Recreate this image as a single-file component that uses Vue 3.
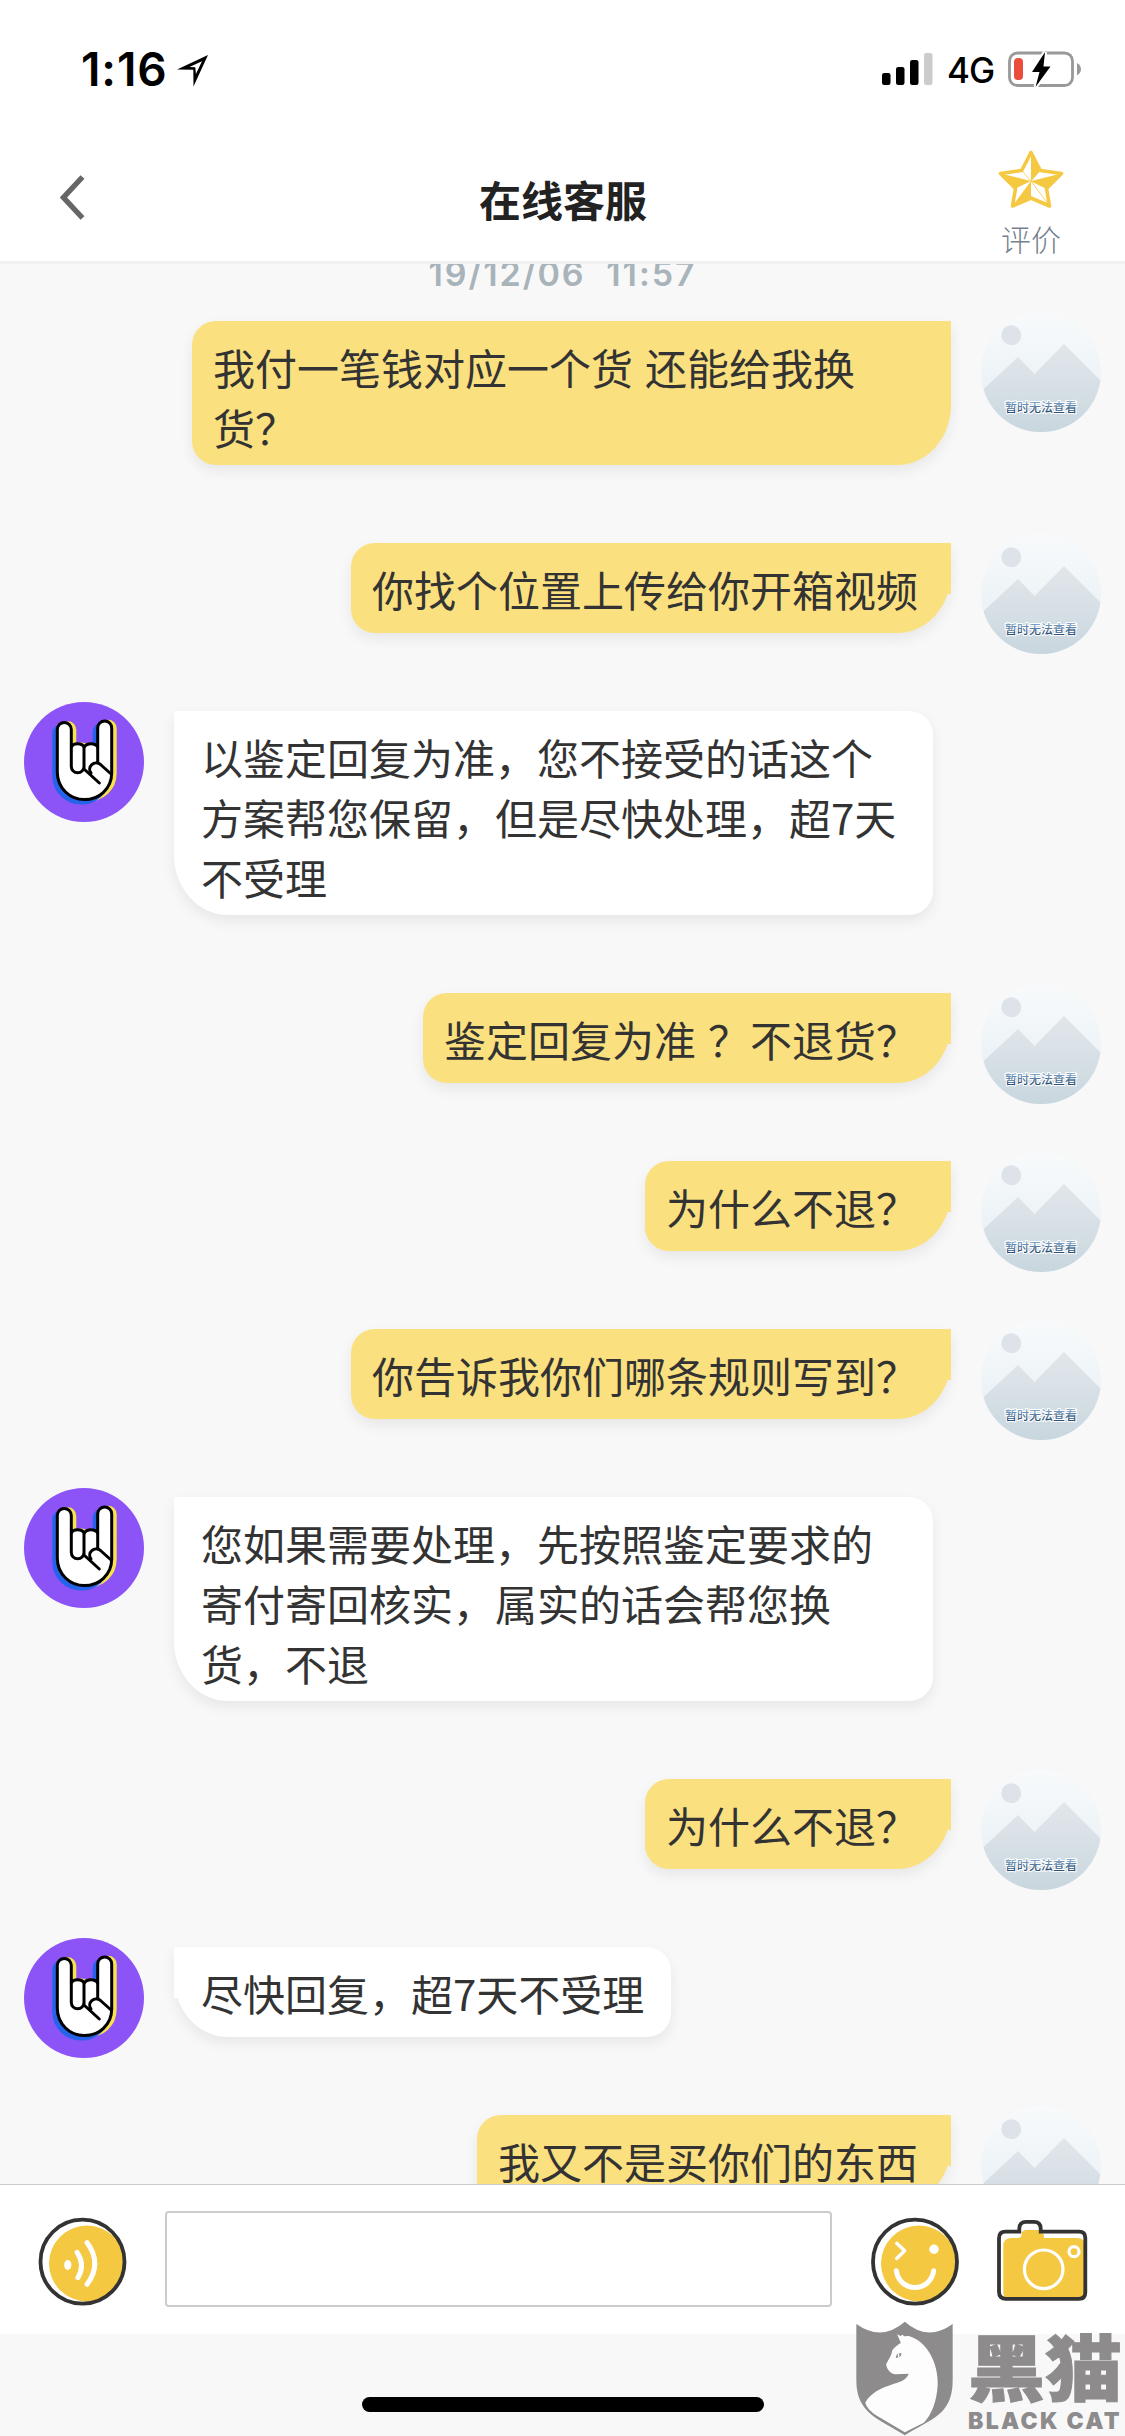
<script setup>
const messages = [
  { me: true, text: '我付一笔钱对应一个货 还能给我换货？' },
  { me: true, text: '你找个位置上传给你开箱视频' },
  { me: false, text: '以鉴定回复为准，您不接受的话这个方案帮您保留，但是尽快处理，超7天不受理' },
  { me: true, text: '鉴定回复为准 ？不退货？' },
  { me: true, text: '为什么不退？' },
  { me: true, text: '你告诉我你们哪条规则写到？' },
  { me: false, text: '您如果需要处理，先按照鉴定要求的寄付寄回核实，属实的话会帮您换货，不退' },
  { me: true, text: '为什么不退？' },
  { me: false, text: '尽快回复，超7天不受理' },
  { me: true, text: '我又不是买你们的东西' },
]

const hand =
  'M33.3 70V27.5a7 7 0 0 1 14 0V45c2-4.500 10.500-4.500 13 0c2.500-4.500 11-4.500 13.400 0V26a7 7 0 0 1 14 0V71c0 16-13 26.600-27.200 26.600S33.300 86.500 33.300 70Z'
</script>

<template>
  <div class="screen">
    <header class="top">
      <div class="status">
        <div class="clock">
          <span class="time">1:16</span>
          <svg class="locate" width="32" height="34" viewBox="0 0 32 34">
            <path d="M0 14.500L31 0L16.500 31.500L16.300 14.700Z" fill="#000" />
            <path d="M12.500 11.900L25 6.300L18.900 19L18.300 12.300Z" fill="#fff" />
          </svg>
        </div>
        <div class="signals">
          <svg width="51" height="32" viewBox="0 0 51 32">
            <rect x="0" y="20" width="8.500" height="12" rx="2.200" />
            <rect x="14" y="14" width="8.500" height="18" rx="2.200" />
            <rect x="28" y="7" width="8.500" height="25" rx="2.200" />
            <rect x="42" y="0" width="8.500" height="32" rx="2.200" fill="#ccc" />
          </svg>
          <span class="net">4G</span>
          <svg class="battery" width="74" height="36" viewBox="0 0 74 36">
            <rect x="1.500" y="2" width="63" height="32.500" rx="8" fill="none" stroke="#999" stroke-width="2.800" />
            <path d="M69 12q4 2.500 4 6.200t-4 6.200Z" fill="#999" />
            <rect x="6" y="7" width="9" height="22" rx="4" fill="#eb4d3d" />
            <path d="M37 1L24 21H31.500L27.500 36L42.500 15.500H35.500Z" fill="#000" stroke="#fff" stroke-width="4" paint-order="stroke" />
          </svg>
        </div>
      </div>
      <nav class="nav">
        <svg class="back" width="26" height="46" viewBox="0 0 26 46">
          <path d="M22.500 2L3.500 22.500L22.500 43" fill="none" stroke="#666" stroke-width="5.400" />
        </svg>
        <h1 class="title">在线客服</h1>
        <div class="rate">
          <svg width="66" height="58" viewBox="0 0 66 58">
            <path d="M33 2.500L42.300 20.500L63.500 23.500L48.500 38.500L51.500 56L33 48L14.500 56L17.500 38.500L2.500 23.500L23.700 20.500Z" fill="#fff" stroke="#f5c842" stroke-width="3.600" stroke-linejoin="round" />
            <g fill="#f5c842">
              <path d="M33 31V2.500L42.300 20.500Z" />
              <path d="M33 31L63.500 23.500L48.500 38.500Z" />
              <path d="M33 31V48L14.500 56Z" />
              <path d="M33 31L17.500 38.500L2.500 23.500Z" />
            </g>
            <path d="M33 31L23.700 20.500M33 31L42.300 20.500M33 31L48.500 38.500M33 31L51.500 56" stroke="#f5c842" stroke-width=".8" />
          </svg>
          <span>评价</span>
        </div>
      </nav>
    </header>

    <main class="chat">
      <div class="date">19/12/06&nbsp; 11:57</div>
      <div v-for="(m, i) in messages" :key="i" class="row" :class="{ me: m.me }">
        <svg v-if="!m.me" class="avatar" width="120" height="120" viewBox="0 0 120 120">
          <circle cx="60" cy="60" r="60" fill="#8c54f7" />
          <path :d="hand" transform="translate(3.500 .3)" fill="#fbe14b" stroke="#fbe14b" stroke-width="3" />
          <path :d="hand" transform="translate(-3.500 3.500)" fill="#2563eb" stroke="#2563eb" stroke-width="3" />
          <path :d="hand" fill="#fff" />
          <g fill="none" stroke="#000" stroke-width="3" stroke-linecap="round" stroke-linejoin="round">
            <path :d="hand" />
            <path d="M47.300 45V64.500a6.300 6.300 0 0 0 12.700 0V45V67L75.300 81M73.700 45V61" />
            <path d="M67 71C62.500 65 70.500 57.500 76.500 62.500L86.500 71.500" />
          </g>
        </svg>
        <p class="bubble">{{ m.text }}</p>
        <svg v-if="m.me" class="avatar" width="120" height="120" viewBox="0 0 120 120">
          <defs>
            <linearGradient id="sky" x1="0" y1="0" x2="0" y2="1">
              <stop offset="0" stop-color="#f8fafb" />
              <stop offset=".2" stop-color="#f4f8fa" />
              <stop offset=".6" stop-color="#ecf2f6" />
              <stop offset="1" stop-color="#e2eaf0" />
            </linearGradient>
            <linearGradient id="hill" x1="0" y1="0" x2="0" y2="1">
              <stop offset="0" stop-color="#e2e6ea" />
              <stop offset=".4" stop-color="#d9e1e7" />
              <stop offset="1" stop-color="#c8d6de" />
            </linearGradient>
            <linearGradient id="ink" x1="0" y1="0" x2="0" y2="1">
              <stop offset="0.2" stop-color="#86aacb" />
              <stop offset=".8" stop-color="#2c5078" />
            </linearGradient>
            <clipPath id="disc"><circle cx="60" cy="60" r="60" /></clipPath>
          </defs>
          <g clip-path="url(#disc)">
            <rect width="120" height="120" fill="url(#sky)" />
            <circle cx="30.300" cy="23.300" r="10" fill="#dee3ea" />
            <path d="M-1 80.500L37 45L53.500 62L83 32L121 70V120H-1Z" fill="url(#hill)" />
          </g>
          <text x="60" y="100" text-anchor="middle" class="tag" fill="url(#ink)">暂时无法查看</text>
        </svg>
      </div>
    </main>

    <footer class="composer">
      <svg class="voice" width="90" height="90" viewBox="0 0 90 90">
        <circle cx="49" cy="46.500" r="38" fill="#f5c842" />
        <circle cx="44.500" cy="44.700" r="42" fill="none" stroke="#333" stroke-width="3.800" />
        <ellipse cx="29.800" cy="48" rx="3.600" ry="5" fill="#fff" />
        <path d="M39.100 35.300Q47.500 47.500 39.900 60.700M49.100 25.700Q64.500 46.500 49.100 67.300" fill="none" stroke="#fff" stroke-width="5" stroke-linecap="round" />
      </svg>
      <div class="field"></div>
      <svg class="emoji" width="90" height="90" viewBox="0 0 90 90">
        <circle cx="48" cy="46.500" r="38" fill="#f5c842" />
        <circle cx="44" cy="44.700" r="42" fill="none" stroke="#333" stroke-width="3.800" />
        <circle cx="63" cy="32.300" r="4.700" fill="#fff" />
        <g fill="none" stroke="#fff" stroke-linecap="round">
          <path d="M25.700 26.300L33.700 33.700L25.700 41.500" stroke-width="3.400" stroke-linejoin="round" />
          <path d="M25.300 53.700C28.500 76 59.500 76 62.700 53.700" stroke-width="5" />
        </g>
      </svg>
      <svg class="camera" width="91" height="82" viewBox="0 0 91 82">
        <path d="M6.300 26q0-8 8-8h6q4.400 0 4.400-4t5-4h11.600q5.700 0 5.700 8H80q8 0 8 8V78H12q-5.700 0-5.700-5Z" fill="#f5c842" />
        <path d="M8.500 11.700H22.300V8.500Q22.300 1.900 29 1.900H37Q43.700 1.900 43.700 8.500V11.700H82q6.300 0 6.300 6.300V72.500q0 6.300-6.300 6.300H9q-7 0-7-7V18.200q0-6.500 6.500-6.500Z" fill="none" stroke="#333" stroke-width="3.800" />
        <circle cx="46.700" cy="49.300" r="19.300" fill="none" stroke="#fff" stroke-width="3.200" />
        <circle cx="77" cy="31.700" r="5" fill="none" stroke="#fff" stroke-width="3.200" />
      </svg>
    </footer>

    <div class="bottom">
      <div class="home"></div>
    </div>

    <div class="brand">
      <svg width="97" height="115" viewBox="48 422 292 346">
        <path d="M49 431Q125 485 195 424Q264 485 339 431V600C339 705 275 715 195 766C115 715 49 700 49 600Z" fill="#8d8b8c" />
        <path d="M172 462L182 467L188 463L193 468L207 467C262 482 296 550 294 612C292 662 275 705 252 728L195 757L112 708C93 696 80 682 76 668C100 620 172 612 190 600C198 596 203 590 207 581L165 582C150 580 138 562 139 551C146 538 156 525 157 511C165 498 180 490 183 488Z" fill="#fdfdfd" />
        <path d="M168 533Q167 519 184 518Q188 530 168 533Z" fill="#8d8b8c" />
        <path d="M176 520V531" stroke="#fdfdfd" stroke-width="4" />
      </svg>
      <div class="words">
        <span class="zh">黑猫</span>
        <span class="en">BLACK CAT</span>
      </div>
    </div>
  </div>
</template>

<style>
body {
  margin: 0;
}
</style>

<style scoped>
.screen {
  position: relative;
  display: flex;
  flex-direction: column;
  width: 1125px;
  height: 2436px;
  overflow: hidden;
  background: #f8f8f8;
  color: #333;
  font-family: "Noto Sans CJK SC", sans-serif;
}
.top {
  box-sizing: border-box;
  height: 264px;
  flex: none;
  border-bottom: 3px solid #f1f1f1;
  background: #fff;
}
.status {
  display: flex;
  justify-content: space-between;
  height: 132px;
  padding: 0 43px 0 81px;
  color: #000;
  font-family: Inter, sans-serif;
}
.clock,
.signals {
  display: flex;
  align-items: center;
  height: 138px;
}
.time {
  width: 96px;
  font-size: 46px;
  font-weight: 600;
  letter-spacing: 0.9px;
}
.locate {
  margin-top: 6px;
}
.net {
  width: 61px;
  margin-left: 14px;
  margin-top: 2px;
  font-size: 35px;
  font-weight: 500;
  letter-spacing: -1px;
}
.nav {
  display: flex;
  height: 129px;
  padding: 0 61px 0 60px;
  justify-content: space-between;
}
.back {
  margin-top: 43px;
  width: 26px;
  margin-right: 40px;
}
.title {
  margin: 37px 0 0;
  font-size: 42px;
  line-height: 60px;
  font-weight: 700;
  color: #222;
  transform: translateX(1px);
}
.rate {
  display: flex;
  flex-direction: column;
  align-items: center;
  padding-top: 18px;
  font-size: 30px;
  line-height: 44px;
  color: #76818d;
  font-weight: 300;
}
.rate span {
  margin-top: 8px;
}
.chat {
  flex: none;
  display: flex;
  flex-direction: column;
  gap: 78px;
  height: 1920px;
  overflow: hidden;
}
.date {
  height: 44px;
  flex: none;
  margin: -12px 0 -53px;
  text-align: center;
  font: 600 34px/44px Inter, sans-serif;
  letter-spacing: 1.900px;
  color: #a8b3ba;
}
.row {
  flex: none;
  display: flex;
  align-items: flex-start;
  gap: 30px;
  padding: 0 24px;
}
.row.me {
  justify-content: flex-end;
}
.avatar {
  flex: none;
  margin: -9px 0 -30px;
}
.tag {
  font-size: 12px;
  font-weight: 500;
  stroke: #fff;
  stroke-width: 2px;
  paint-order: stroke;
}
.bubble {
  position: relative;
  box-sizing: border-box;
  max-width: 759px;
  min-height: 90px;
  margin: 0;
  padding: 16px 27px 8px;
  border-radius: 0 24px 24px 54px / 0 24px 24px 60px;
  background: #fff;
  box-shadow: 0 6px 14px rgba(0, 0, 0, 0.07);
  font-size: 42px;
  line-height: 60px;
  word-spacing: 2.600px;
}
.bubble::after {
  content: "";
  position: absolute;
  top: 0;
  left: 0;
  width: 6px;
  height: 51px;
  background: inherit;
}
.me .bubble {
  padding: 16px 33px 8px 21px;
  border-radius: 24px 0 54px 24px / 24px 0 60px 24px;
  background: #fbe07f;
}
.me .bubble::after {
  left: auto;
  right: 0;
}
.composer {
  box-sizing: border-box;
  flex: none;
  display: flex;
  align-items: flex-start;
  height: 150px;
  padding: 26px 37px 0 38px;
  border-top: 1px solid #ccc;
  background: #fff;
}
.voice,
.emoji {
  margin-top: 6px;
}
.field {
  box-sizing: border-box;
  width: 667px;
  height: 96px;
  margin: 0 39px 0 37px;
  border: 2px solid #ccc;
  border-radius: 4px;
}
.camera {
  margin: 9px 0 0 36px;
}
.bottom {
  display: flex;
  justify-content: center;
  padding-top: 63px;
}
.home {
  width: 402px;
  height: 15px;
  border-radius: 8px;
  background: #000;
}
.brand {
  position: absolute;
  right: 0;
  bottom: 0;
  display: flex;
  gap: 15px;
  width: 269px;
  height: 115px;
  color: #8d8b8c;
}
.words {
  display: flex;
  flex-direction: column;
  white-space: nowrap;
}
.zh {
  height: 86px;
  width: 152px;
  font-size: 72px;
  line-height: 86px;
  font-weight: 900;
  transform: scaleX(1.070);
  transform-origin: left;
  -webkit-text-stroke: 1px #8d8b8c;
}
.en {
  font: 900 23px/28px Inter, sans-serif;
  letter-spacing: 2.300px;
}
</style>
